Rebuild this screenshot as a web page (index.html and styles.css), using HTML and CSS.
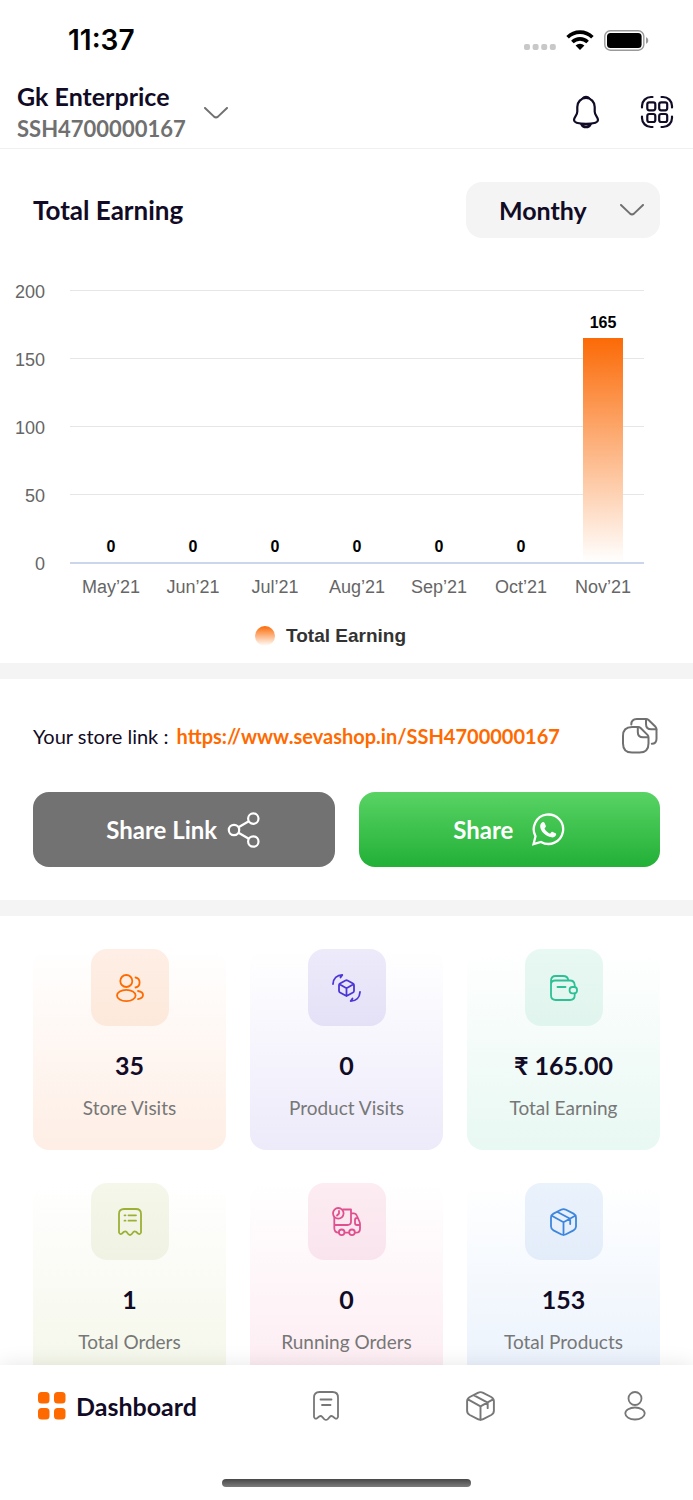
FILE: index.html
```html
<!DOCTYPE html>
<html lang="en">
<head>
<meta charset="utf-8">
<meta name="viewport" content="width=device-width, initial-scale=1">
<title>Dashboard</title>
<link rel="stylesheet" href="styles.css">
</head>
<body>
<div class="app">
  <div class="status">
    <span class="status-time">11:37</span>
    <span class="status-icons">
      <svg width="32" height="6" viewBox="0 0 32 6" fill="#c8c8c8"><rect width="6" height="6" rx="2"/><rect x="8.6" width="6" height="6" rx="2"/><rect x="17.2" width="6" height="6" rx="2"/><rect x="25.8" width="6" height="6" rx="2"/></svg>
      <svg class="wifi" width="28" height="20" viewBox="0 0 28 20" fill="none" stroke="#000" stroke-width="3.6"><path d="M1.6 7.2a17.6 17.6 0 0 1 24.8 0"/><path d="M6.4 12a10.8 10.8 0 0 1 15.2 0"/><path d="M14 20l-4.4-4.5a6.3 6.3 0 0 1 8.8 0z" fill="#000" stroke="none"/></svg>
      <svg width="45" height="21" viewBox="0 0 45 21"><rect x=".8" y=".8" width="39" height="19.4" rx="5.5" fill="none" stroke="#999" stroke-width="1.4"/><rect x="3" y="3" width="34.6" height="15" rx="3.5"/><path d="M42 7.2c3 1 3 5.600 0 6.600z" fill="#999"/></svg>
    </span>
  </div>

  <header class="header">
    <button class="store" type="button">
      <span class="store-text"><span class="store-name">Gk Enterprice</span><span class="store-id">SSH4700000167</span></span>
      <svg class="chevron" viewBox="0 0 24 12"><path d="M1 1l9 8.600q2 1.600 4 0L23 1"/></svg>
    </button>
    <div class="header-actions">
      <button type="button" aria-label="Notifications"><svg width="28" height="34" viewBox="0 0 28 34" fill="none" stroke="#110b26" stroke-width="2.200"><path d="M14 3C9 3 5.300 7 5.300 12v4.500C5.300 20.500 2 22 2 25c0 2.800 6 3.800 12 3.800S26 27.800 26 25c0-3-3.300-4.500-3.300-8.500V12C22.700 7 19 3 14 3z"/><path d="M11 3c1-1.500 5-1.500 6 0zM9.500 29.500c1.500 3.600 7.500 3.600 9 0z"/></svg></button>
      <button type="button" aria-label="Scan code"><svg width="34" height="34" viewBox="0 0 34 34" fill="none" stroke="#110b26" stroke-width="2.200" stroke-linecap="round"><path d="M2 12.500V11a9 9 0 0 1 9-9h1.500M21.500 2H23a9 9 0 0 1 9 9v1.500M32 21.500V23a9 9 0 0 1-9 9h-1.500M12.500 32H11a9 9 0 0 1-9-9v-1.500"/><rect x="7.300" y="7.300" width="8" height="8" rx="2"/><rect x="19.200" y="7.300" width="8" height="8" rx="2"/><rect x="7.300" y="19" width="8" height="8" rx="2"/><rect x="19.200" y="19" width="8" height="8" rx="2"/></svg></button>
    </div>
  </header>

  <main class="content">
    <section class="earning">
      <div class="earning-head">
        <h2>Total Earning</h2>
        <label class="period"><select aria-label="Period"><option>Monthy</option></select><svg class="chevron" viewBox="0 0 24 12"><path d="M1 1l9 8.600q2 1.600 4 0L23 1"/></svg></label>
      </div>
      <div class="chart">
        <div class="y-axis"><span>200</span><span>150</span><span>100</span><span>50</span><span>0</span></div>
        <div class="grid-lines"><i></i><i></i><i></i><i></i><i></i></div>
        <div class="bars">
          <div class="bar-col"><b>0</b></div>
          <div class="bar-col"><b>0</b></div>
          <div class="bar-col"><b>0</b></div>
          <div class="bar-col"><b>0</b></div>
          <div class="bar-col"><b>0</b></div>
          <div class="bar-col"><b>0</b></div>
          <div class="bar-col"><b>165</b><div class="bar" style="height:82.5%"></div></div>
        </div>
        <div class="x-axis"><span>May’21</span><span>Jun’21</span><span>Jul’21</span><span>Aug’21</span><span>Sep’21</span><span>Oct’21</span><span>Nov’21</span></div>
      </div>
      <div class="legend"><span class="legend-dot"></span>Total Earning</div>
    </section>

    <section class="share">
      <div class="link-row">
        <p>Your store link : <a href="#">https://www.sevashop.in/SSH4700000167</a></p>
        <button type="button" aria-label="Copy link"><svg width="36" height="36" viewBox="0 0 36 36" fill="none" stroke="#707070" stroke-width="2" stroke-linejoin="round" stroke-linecap="round"><path d="M16 9h-6q-9 0-9 9v7.500Q1 34.500 10 34.500h7.500q9 0 9-9V19.500q0-1.500-1-2.600L18.600 10Q17.500 9 16 9z"/><path d="M15.800 9.300V14q0 5.300 5.300 5.300h5M9.300 6.500Q9.300 1 14.800 1H24q1.500 0 2.600 1L33.500 8.800q1 1.100 1 2.700v9.300q0 5-4.700 5"/><path d="M24 1.300V6q0 5.300 5.300 5.300h5"/></svg></button>
      </div>
      <div class="share-buttons">
        <button class="btn btn-link" type="button">Share Link <svg width="34" height="36" viewBox="0 0 34 36" fill="none" stroke="#fff" stroke-width="2.200"><circle cx="7" cy="18" r="5.200"/><circle cx="26.300" cy="6.600" r="5.200"/><circle cx="26.300" cy="29.500" r="5.200"/><path d="M11.500 15.300l10.300-6M11.500 20.700l10.300 6.100"/></svg></button>
        <button class="btn btn-whatsapp" type="button">Share <svg width="33" height="33" viewBox="0 0 33 33"><path d="M1.500 31.200l2-8A14.700 14.700 0 1 1 9 28.900z" fill="none" stroke="#fff" stroke-width="2.300"/><path d="M10.500 9.200c.9-.4 1.700 0 2.100.9l1.200 2.700c.3.800-.1 1.400-1.300 2.700 1.200 2.400 3 4.100 5.600 5.200 1.400-1.800 1.800-2.200 2.700-1.800l2.700 1.300c.8.400.8.900.5 1.900-.6 1.700-2.700 2.600-4.600 2.200-5.400-1-10-5-11.100-9.800-.5-2.400.5-4.400 2.200-5.300z" fill="#fff"/></svg></button>
      </div>
    </section>

    <section class="stats">
      <article class="card orange">
        <div class="tile"><svg width="28" height="28" viewBox="0 0 28 28"><circle cx="10.300" cy="7" r="6"/><ellipse cx="10.300" cy="21.500" rx="9.300" ry="5.600"/><path d="M19.500 3.500a5.100 5.100 0 0 1 0 10M22 17c3.300.5 5 2 5 4s-1.700 3.600-5 4.200"/></svg></div>
        <strong>35</strong><span>Store Visits</span>
      </article>
      <article class="card purple">
        <div class="tile"><svg width="29" height="28" viewBox="0 0 29 28"><path d="M13.500 6.500q1-.5 2 0l5.500 3q1 .6 1 1.700v5.600q0 1.100-1 1.700l-5.500 3q-1 .5-2 0l-5.500-3q-1-.6-1-1.700v-5.600q0-1.100 1-1.700zM7.500 10.300l7 4 7-4M14.500 14.300V22M1 10C1.300 4.500 5 1 10.300 1L8.500 3.500M28 18c-.3 5.500-4 9-9.300 9l1.800-2.500"/></svg></div>
        <strong>0</strong><span>Product Visits</span>
      </article>
      <article class="card green">
        <div class="tile"><svg width="28" height="26" viewBox="0 0 28 26"><path d="M24.700 18.500v1.800Q24.700 25 20 25H5.700Q1 25 1 20.300V9.700q0-4.200 4.200-4.200H20q4.300 0 4.700 4.500v2M1 9V5.700Q1 1 5.700 1H13q5 0 5.300 4.500M7.500 12h8"/><rect x="19.600" y="12" width="7.400" height="6.400" rx="2.800"/></svg></div>
        <strong>₹ 165.00</strong><span>Total Earning</span>
      </article>
      <article class="card olive">
        <div class="tile"><svg width="24" height="28" viewBox="0 0 24 28"><path d="M1 24.500V6q0-5 5-5h12q5 0 5 5v18.500q-1 2.500-3 1L18 23.800q-1.500-1-2.800.4l-1.600 2q-1.600 1.600-3.200 0l-1.600-2Q7.500 22.800 6 23.800L4 25.500q-2 1.500-3-1z"/><path d="M6.500 7.300h1M10.500 7.300h7.500M6.500 12.700h1M10.500 12.700h7.500"/></svg></div>
        <strong>1</strong><span>Total Orders</span>
      </article>
      <article class="card pink">
        <div class="tile"><svg width="29" height="29" viewBox="0 0 29 29"><circle cx="6.300" cy="6.300" r="5.300"/><path d="M7 3.800v2.700L5 8.500M11 2.500h8v12q0 3.500-3.500 3.500H2.300M2.300 10.500V21q0 4.700 4.400 4.700M12.700 25.700H17M23 25.700h1q4 0 4-4V17q0-1-.4-2l-2.800-6.500Q24 6.300 22 6.300h-3M28 18h-3q-2 0-2-2v-3q0-2 2-2h.8"/><circle cx="9.700" cy="25.300" r="2.800"/><circle cx="20" cy="25.300" r="2.800"/></svg></div>
        <strong>0</strong><span>Running Orders</span>
      </article>
      <article class="card blue">
        <div class="tile"><svg width="27" height="28" viewBox="0 0 27 28"><path id="box-icon" d="M11 1.700q2.500-1.300 5 0l7.500 3.900Q26 7 26 9.500v9q0 2.500-2.500 3.900L16 26.300q-2.500 1.300-5 0L3.500 22.400Q1 21 1 18.500v-9Q1 7 3.500 5.600zM1.800 7.800l11.700 6.500 11.700-6.500M13.500 14.300V27M7.500 4l12.700 6.800V16"/></svg></div>
        <strong>153</strong><span>Total Products</span>
      </article>
    </section>
  </main>

  <nav class="nav">
    <div class="tabs">
      <button class="tab active" type="button"><svg width="28" height="28" viewBox="0 0 28 28"><rect width="11.500" height="11.500" rx="3.500"/><rect x="16" width="11.500" height="11.500" rx="3.500"/><rect y="16" width="11.500" height="11.500" rx="3.500"/><rect x="16" y="16" width="11.500" height="11.500" rx="3.500"/></svg>Dashboard</button>
      <button class="tab" type="button" aria-label="Orders"><svg width="26" height="30" viewBox="0 0 26 30"><path d="M1 26V6.500Q1 1 6.500 1h13Q25 1 25 6.500V26q-1 2.500-3 1.200L19.800 25.500q-1.600-1.200-3 .3l-2 2.300q-1.800 1.600-3.600 0l-2-2.300q-1.400-1.500-3-.3L4 27.200Q2 28.500 1 26zM7.500 8.500h11M9 14h8.500"/></svg></button>
      <button class="tab" type="button" aria-label="Products"><svg width="29" height="30" viewBox="0 0 27 28"><use href="#box-icon"/></svg></button>
      <button class="tab" type="button" aria-label="Profile"><svg width="22" height="30" viewBox="0 0 22 30"><circle cx="11" cy="7.500" r="6.500"/><ellipse cx="11" cy="22.500" rx="9.700" ry="6"/></svg></button>
    </div>
    <div class="home-bar"></div>
  </nav>
</div>
</body>
</html>
```
FILE: styles.css
```css
* { box-sizing: border-box; }

body {
  margin: 0;
  background: #fff;
  color: #110b26;
  font-family: Lato, "Noto Sans", sans-serif;
}

button, select {
  margin: 0;
  padding: 0;
  border: 0;
  background: none;
  color: inherit;
  font: inherit;
}

h2, p { margin: 0; }
svg { display: block; flex: none; }

.app {
  display: flex;
  flex-direction: column;
  height: 100vh;
}

.status {
  display: flex;
  justify-content: space-between;
  align-items: center;
  height: 80px;
  padding: 0 44px 0 68px;
  flex: none;
}
.status-time {
  color: #000;
  font: 600 28px/32px Inter, sans-serif;
}
.status-icons { display: flex; align-items: center; gap: 10px; }
.status-icons svg:first-child { margin-top: 14px; }

.header {
  display: flex;
  justify-content: space-between;
  align-items: center;
  height: 69px;
  padding: 0 19px 4px 17px;
  border-bottom: 1px solid #f0f0f0;
  flex: none;
}
.store { display: flex; align-items: center; gap: 18px; padding-top: 2px; text-align: left; }
.store-text { display: flex; flex-direction: column; }
.store-name { font-size: 25px; line-height: 32px; font-weight: 700; }
.store-id { font-size: 22px; line-height: 34px; font-weight: 700; color: #707070; }
.header-actions { display: flex; align-items: center; gap: 40px; }

.chevron {
  width: 24px;
  height: 12px;
  fill: none;
  stroke: #707070;
  stroke-width: 2;
  stroke-linecap: round;
}

.content {
  flex: 1;
  min-height: 0;
  overflow-y: auto;
  scrollbar-width: none;
}

.earning { padding: 33px 0 14px; border-bottom: 16px solid #f4f4f4; }
.earning-head {
  display: flex;
  justify-content: space-between;
  align-items: center;
  padding: 0 33px;
}
.earning-head h2 { font-size: 26px; line-height: 32px; font-weight: 700; }
.period { display: grid; align-items: center; }
.period > * { grid-area: 1 / 1; }
.period select {
  appearance: none;
  width: 194px;
  height: 56px;
  padding: 0 33px;
  border-radius: 16px;
  background: #f4f4f4;
  font-size: 25px;
  font-weight: 700;
}
.period .chevron { justify-self: end; margin-right: 16px; pointer-events: none; }

.chart {
  display: grid;
  grid-template-columns: 45px 1fr;
  grid-template-rows: 274px auto;
  column-gap: 25px;
  margin-top: 52px;
  padding-right: 49px;
  color: #666;
  font: 18px/20px "Liberation Sans", Arial, sans-serif;
}
.y-axis {
  display: flex;
  flex-direction: column;
  justify-content: space-between;
  margin: -8px 0 -10px;
  text-align: right;
}
.grid-lines, .bars { grid-area: 1 / 2; display: flex; }
.grid-lines { flex-direction: column; justify-content: space-between; }
.grid-lines i { height: 1px; background: #e6e6e6; }
.grid-lines i:last-child { height: 2px; background: #ccd6eb; }
.bars { padding-bottom: 2px; z-index: 1; }
.bar-col {
  flex: 1;
  display: flex;
  flex-direction: column;
  justify-content: flex-end;
  align-items: center;
}
.bar-col b { margin-bottom: 5px; color: #000; font-size: 16px; }
.bar { width: 40px; flex: none; background: linear-gradient(#fb6a06, #fff); }
.x-axis { grid-column: 2; display: flex; padding-top: 13px; }
.x-axis span { flex: 1; text-align: center; }

.legend {
  display: flex;
  align-items: center;
  justify-content: center;
  gap: 11px;
  margin: 27px 32px 1px 0;
  color: #333;
  font: bold 19px/24px "Liberation Sans", Arial, sans-serif;
}
.legend-dot {
  width: 20px;
  height: 20px;
  border-radius: 50%;
  background: linear-gradient(#fb6a06, #fff);
}

.share { padding: 39px 33px 33px; border-bottom: 16px solid #f4f4f4; }
.link-row { display: flex; align-items: center; justify-content: space-between; padding-right: 2px; }
.link-row p { font-size: 20px; line-height: 28px; }
.link-row a { margin-left: 3px; color: #ff6a00; font-weight: 700; text-decoration: none; }
.share-buttons { display: grid; grid-template-columns: 1fr 1fr; gap: 24px; margin-top: 38px; }
.btn {
  display: flex;
  align-items: center;
  justify-content: center;
  gap: 10px;
  height: 75px;
  border-radius: 16px;
  color: #fff;
  font-size: 24px;
  font-weight: 700;
}
.btn-link { background: #727272; }
.btn-whatsapp { gap: 19px; background: linear-gradient(#59d364, #22b037); }

.stats {
  display: grid;
  grid-template-columns: repeat(3, 1fr);
  gap: 33px 24px;
  padding: 33px;
}
.card {
  display: flex;
  flex-direction: column;
  align-items: center;
  height: 201px;
  border-radius: 16px;
  background: linear-gradient(#fff, var(--tint));
}
.card strong { margin-top: 23px; font-size: 25px; line-height: 32px; }
.card > span { margin-top: 15px; color: #777; font-size: 19px; line-height: 24px; }
.tile {
  display: grid;
  place-items: center;
  width: 78px;
  height: 77px;
  border-radius: 16px;
  background: linear-gradient(var(--tint), var(--tint-deep));
}
.tile svg {
  fill: none;
  stroke: var(--ink);
  stroke-width: 1.8;
  stroke-linecap: round;
  stroke-linejoin: round;
}
.orange { --tint: #feeee5; --tint-deep: #fde9db; --ink: #ff6a00; }
.purple { --tint: #edeafa; --tint-deep: #e4e1f7; --ink: #4a35d6; }
.green { --tint: #e8f8f2; --tint-deep: #e0f5ed; --ink: #2cc094; }
.olive { --tint: #f4f7e9; --tint-deep: #f0f3e3; --ink: #9bb136; }
.pink { --tint: #fdecf2; --tint-deep: #f9e4ed; --ink: #e0508e; }
.blue { --tint: #eaf2fc; --tint-deep: #e3edf9; --ink: #3c86de; }

.nav {
  position: relative;
  flex: none;
  background: #fff;
  box-shadow: 0 0 20px rgba(0, 0, 0, 0.1);
}
.tabs {
  display: grid;
  grid-template-columns: minmax(0, 1fr) repeat(3, 32px);
  column-gap: 20%;
  height: 81px;
  padding: 0 42px 0 38px;
}
.tab { display: flex; align-items: center; justify-content: center; white-space: nowrap; }
.tab svg { fill: none; stroke: #777; stroke-width: 1.8; stroke-linecap: round; }
.tab.active { justify-content: flex-start; gap: 10px; font-size: 25px; font-weight: 700; }
.tab.active svg { fill: #ff6a00; stroke: none; }
.home-bar {
  width: 36%;
  height: 8px;
  margin: 33px auto 13px;
  border-radius: 4px;
  background: linear-gradient(#484848, #7c7c7c);
}
```
